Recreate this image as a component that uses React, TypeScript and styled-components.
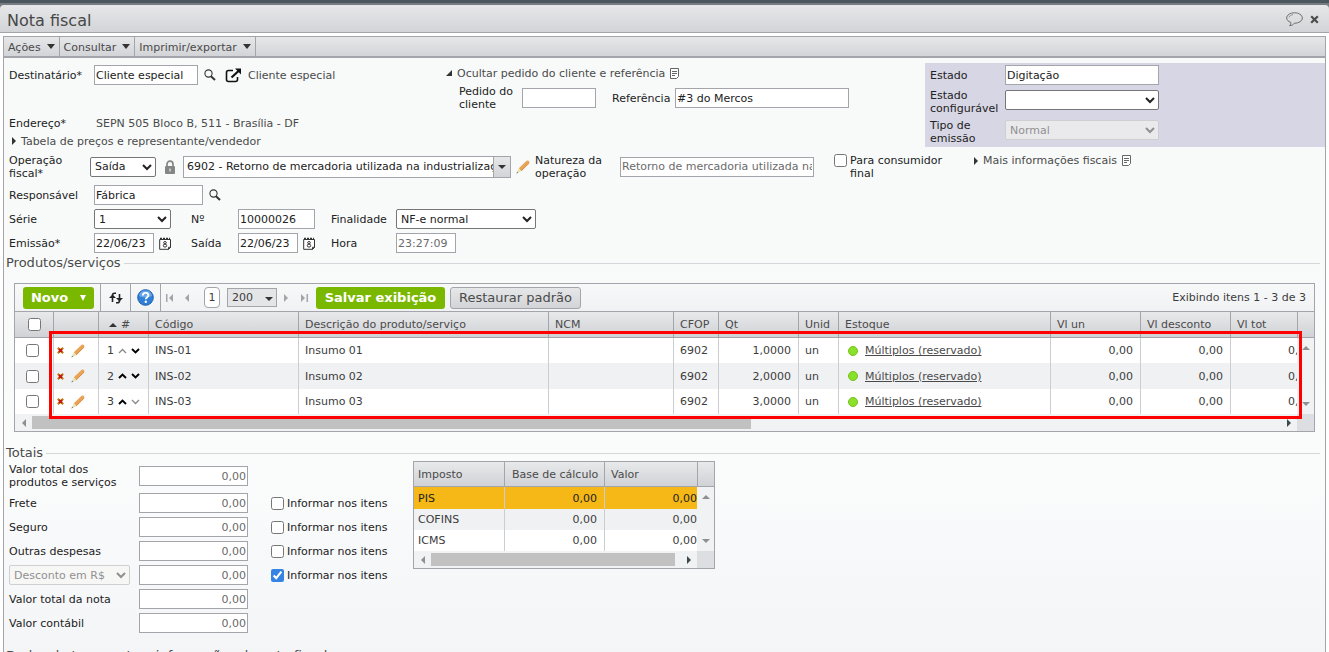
import React from "react";
import styled, { createGlobalStyle, css } from "styled-components";

const line = "#a3a5ab";
const bar = "linear-gradient(#e6e7e9, #d2d4d7)";

const GlobalStyle = createGlobalStyle`
  *, *::before, *::after { box-sizing: border-box; }
  html, body { margin: 0; height: 100%; overflow: hidden; background: #fff; }
  #root { height: 100%; }
  body, input, select, button, table {
    font-family: "DejaVu Sans", Verdana, sans-serif;
    font-size: 11px;
    line-height: 13px;
    color: #3c3c3c;
  }
  svg { display: block; flex: none; }
`;

/* ---------- window ---------- */
const Window = styled.div`
  display: flex;
  flex-direction: column;
  height: 100vh;
  overflow: hidden;
`;
const Backdrop = styled.div`
  background: linear-gradient(#4a585d 0 3px, #777c80 3px);
  padding-top: 5px;
`;
const TitleBar = styled.header`
  display: flex;
  align-items: center;
  height: 28px;
  padding: 4px 10px 0 7px;
  background: ${bar};
  border-bottom: 1px solid ${line};
  border-radius: 4px 4px 0 0;
`;
const Title = styled.h1`
  flex: 1;
  margin: 0;
  font-size: 16px;
  line-height: 20px;
  font-weight: 400;
  color: #474747;
`;
const BareButton = styled.button`
  display: inline-flex;
  align-items: center;
  justify-content: center;
  flex: none;
  padding: 0;
  border: 0;
  background: none;
  cursor: pointer;
`;
const WindowActions = styled.div`
  display: flex;
  align-items: center;
  gap: 7px;
  margin-top: -3px;
`;
const Frame = styled.main`
  flex: 1;
  min-height: 0;
  overflow: hidden;
  margin: 3px 3px 0;
  border: 1px solid ${line};
  border-bottom: 0;
  background: linear-gradient(#f7faf9 0, #fafbfb 72%, #f4f5f7 100%);
`;
const MenuBar = styled.nav`
  display: flex;
  height: 21px;
  background: ${bar};
  border-bottom: 2px solid ${line};
`;
const MenuButton = styled.button`
  display: flex;
  align-items: center;
  gap: 6px;
  padding: 2px 4px 0;
  border: 0;
  border-right: 1px solid ${line};
  background: none;
  color: #4a4a4a;
`;
const Caret = styled.span`
  border: 4px solid transparent;
  border-top: 5px solid #333;
  border-bottom: 0;
  margin-top: -3px;
`;

/* ---------- form parts ---------- */
const control = css<{ $w?: number; $right?: boolean; $muted?: boolean }>`
  flex: none;
  width: ${(p) => (p.$w ? p.$w + "px" : "100%")};
  height: 20px;
  margin: 0;
  background: #fff;
  color: ${(p) => (p.$muted ? "#6a6a6a" : "#222")};
`;
const TextBox = styled.input`
  ${control}
  padding: 0 1px;
  border: 1px solid ${line};
  text-align: ${(p) => (p.$right ? "right" : "left")};
`;
const Select = styled.select`
  ${control}
  padding: 0;
  border: 1px solid #767676;
  border-radius: 2px;
  &:disabled {
    color: #909090;
    background: rgba(246, 246, 244, 0.6);
    border-color: #cfcfd2;
    opacity: 1;
  }
`;
const Label = styled.label<{ $w?: number }>`
  flex: none;
  width: ${(p) => (p.$w ? p.$w + "px" : "auto")};
  color: #222;
`;
const Value = styled.span`
  color: #4a4a4a;
`;
const Header = styled.section`
  display: grid;
  grid-template-columns: 441fr 480fr 400fr;
  padding-top: 5px;
`;
const Column = styled.div<{ $pad: number }>`
  min-width: 0;
  padding-left: ${(p) => p.$pad}px;
`;
const Row = styled.div<{ $h?: number; $gap?: number }>`
  display: flex;
  align-items: center;
  gap: ${(p) => p.$gap ?? 0}px;
  min-height: ${(p) => p.$h ?? 24}px;
  white-space: nowrap;
`;
const AddressRow = styled(Row)`
  margin-top: 27px;
`;
const AddressLabel = styled.span`
  flex: none;
  width: 87px;
  color: #222;
`;
const Gap = styled.span<{ $w: number }>`
  flex: none;
  width: ${(p) => p.$w}px;
`;
const Disclosure = styled.button`
  display: flex;
  align-items: center;
  gap: 5px;
  padding: 0;
  border: 0;
  background: none;
  color: #4a4a4a;
  white-space: nowrap;
`;
const FiscalDisclosure = styled(Disclosure)`
  align-self: flex-start;
  margin-top: 4px;
`;
const StatePanel = styled.div`
  display: grid;
  grid-template-columns: 75px 154px;
  grid-template-rows: 24px 30px 30px;
  align-items: center;
  padding-left: 5px;
  align-self: start;
  background: #d7d6e4;
  & > input, & > select {
    align-self: start;
    margin-top: 3px;
  }
  & > input { margin-top: 2px; }
`;
const OperationRow = styled.section`
  display: flex;
  align-items: center;
  height: 33px;
  padding-left: 5px;
`;
const Combo = styled.div`
  display: flex;
  width: 328px;
  height: 22px;
  border: 1px solid ${line};
  background: #fff;
  & > input {
    flex: 1;
    min-width: 0;
    padding: 0 0 0 3px;
    border: 0;
    background: none;
    color: #222;
  }
`;
const ComboButton = styled.button`
  display: grid;
  place-items: center;
  width: 17px;
  padding: 0;
  border: 0;
  border-left: 1px solid ${line};
  background: ${bar};
`;
const Check = styled.input.attrs({ type: "checkbox" })`
  flex: none;
  width: 13px;
  height: 13px;
  margin: 0;
  accent-color: #3584e4;
`;
const CheckLabel = styled.label<{ $w?: number }>`
  display: flex;
  align-items: flex-start;
  gap: 3px;
  width: ${(p) => (p.$w ? p.$w + "px" : "auto")};
  color: #222;
`;
const Details = styled.div`
  padding-left: 5px;
`;
const Dates = styled.div`
  display: grid;
  grid-template-columns: 85px 97px 47px 93px 65px 140px;
  grid-auto-rows: 24px;
  align-items: center;
`;
const SectionTitle = styled.h2`
  display: flex;
  align-items: center;
  gap: 3px;
  margin: 0;
  padding: 0 5px 0 2px;
  font-size: 13px;
  line-height: 16px;
  font-weight: 400;
  color: #4a4a4a;
  &::after {
    content: "";
    flex: 1;
    border-top: 1px solid #d4d6da;
  }
`;

/* ---------- items grid ---------- */
const GridBox = styled.section`
  position: relative;
  margin: 12px 10px 13px;
  border: 1px solid ${line};
  background: #fff;
`;
const Highlight = styled.div`
  position: absolute;
  top: 47px;
  left: 34px;
  right: 12px;
  height: 88px;
  border: 3px solid #f00;
  pointer-events: none;
`;
const ToolBar = styled.div`
  display: flex;
  align-items: center;
  height: 28px;
  padding: 0 8px;
  background: linear-gradient(#f7f8f8, #f1f2f4);
  border-bottom: 1px solid ${line};
`;
const GreenButton = styled.button<{ $w: number }>`
  display: flex;
  align-items: center;
  justify-content: center;
  gap: 12px;
  width: ${(p) => p.$w}px;
  height: 22px;
  padding: 0;
  border: 0;
  border-radius: 3px;
  background: #7ab800;
  color: #fff;
  font-size: 13px;
  font-weight: 700;
  white-space: nowrap;
`;
const GreyButton = styled(GreenButton)`
  border: 1px solid ${line};
  background: ${bar};
  color: #4a4a4a;
  font-weight: 400;
`;
const WhiteCaret = styled.span`
  border: 3px solid transparent;
  border-top: 6px solid #fff;
  border-bottom: 0;
`;
const ToolCell = styled(BareButton)<{ $w: number; $line?: boolean }>`
  width: ${(p) => p.$w}px;
  height: 27px;
  border-left: ${(p) => (p.$line ? `1px solid ${line}` : "0")};
`;
const PageBox = styled.button`
  width: 16px;
  height: 21px;
  padding: 0;
  border: 1px solid ${line};
  border-radius: 4px;
  background: #fff;
`;
const PageSize = styled.div`
  position: relative;
  width: 50px;
  height: 20px;
  & > select {
    appearance: none;
    width: 100%;
    height: 19px;
    padding: 0 4px;
    border: 1px solid ${line};
    background: #e4e5e7;
  }
  & > span {
    position: absolute;
    right: 4px;
    top: 9px;
    pointer-events: none;
  }
`;
const Summary = styled.span`
  margin-left: auto;
`;
const Table = styled.table`
  width: 100%;
  table-layout: fixed;
  border-collapse: separate;
  border-spacing: 0;
`;
const Th = styled.th<{ $w?: number; $pad?: number; $h?: number }>`
  width: ${(p) => (p.$w ? p.$w + "px" : "auto")};
  height: ${(p) => p.$h ?? 26}px;
  padding: 0 0 0 ${(p) => p.$pad ?? 6}px;
  border-left: 1px solid ${line};
  border-bottom: 1px solid ${line};
  background: linear-gradient(#e8e9eb, #d0d2d5);
  color: #4a4a4a;
  font-weight: 400;
  text-align: left;
  white-space: nowrap;
  &:first-child { border-left: 0; }
`;
const Td = styled.td<{ $right?: boolean; $pad?: number }>`
  height: inherit;
  padding: 0 7px 0 ${(p) => p.$pad ?? 6}px;
  border-left: 1px solid #cbcdd0;
  text-align: ${(p) => (p.$right ? "right" : "left")};
  white-space: nowrap;
  overflow: hidden;
  &:first-child { border-left: 0; }
`;
const ItemTr = styled.tr`
  height: 25px;
  &:nth-child(even) { background: #f0f1f3; }
  &:nth-child(2) { height: 26px; }
`;
const Icons = styled.span<{ $gap: number }>`
  display: flex;
  align-items: center;
  gap: ${(p) => p.$gap}px;
`;
const Link = styled.a`
  color: #4a4a4a;
`;
const Dot = styled.span`
  width: 10px;
  height: 10px;
  border-radius: 50%;
  border: 1px solid #74c21c;
  background: #8ae02a;
`;
const ScrollTd = styled.td`
  padding: 0;
  background: #f1f2f3;
`;
const ScrollTrack = styled.div<{ $h: number }>`
  display: flex;
  flex-direction: column;
  align-items: center;
  justify-content: space-between;
  height: ${(p) => p.$h}px;
  padding: 8px 0;
`;
const HScroll = styled.div`
  display: flex;
  align-items: center;
  height: 17px;
  background: #f1f2f3;
`;
const ScrollEnd = styled.span`
  display: grid;
  place-items: center;
  flex: none;
  width: 17px;
`;
const ThumbTrack = styled.span`
  flex: 1;
  display: flex;
`;
const Thumb = styled.span<{ $pct: number }>`
  width: ${(p) => p.$pct}%;
  height: 13px;
  background: #c1c1c1;
`;
const Corner = styled.span`
  width: 17px;
  height: 17px;
  background: #dcdee1;
`;

/* ---------- totals ---------- */
const Totals = styled.section`
  display: flex;
  align-items: flex-start;
  min-height: 187px;
`;
const TotalsForm = styled.div`
  width: 409px;
  padding-left: 5px;
`;
const LabelCell = styled.div`
  flex: none;
  width: 130px;
  color: #222;
`;
const TaxBox = styled.div`
  width: 302px;
  border: 1px solid ${line};
  background: #fff;
`;
const TaxTr = styled.tr<{ $active?: boolean }>`
  height: 21px;
  &:nth-child(even) { background: #f0f1f3; }
  ${(p) => p.$active && css`
    height: 22px;
    background: #f5b816;
    td { color: #222; }
  `}
`;
const ClippedTd = styled(Td)`
  padding-left: ${(p) => p.$pad}px;
  padding-right: 0;
`;

/* ---------- icons ---------- */
const SearchIcon = () => (
  <svg width="12" height="12" viewBox="0 0 12 12" fill="none" stroke="#333">
    <circle cx="4.5" cy="4.5" r="3.6" strokeWidth="1.1" />
    <path d="M7 7.3 11 11" strokeWidth="2" />
  </svg>
);
const OpenIcon = () => (
  <svg width="17" height="15" viewBox="0 0 17 15" fill="none" stroke="#111">
    <path d="M8 2.5H3.5Q1.5 2.5 1.5 4.5v7q0 2 2 2h7q2 0 2-2V9" strokeWidth="1.6" />
    <path d="M6.5 9.5 13.5 3" strokeWidth="2.2" />
    <path d="M10 .5h6v6z" fill="#111" stroke="none" />
  </svg>
);
const NoteIcon = () => (
  <svg width="9" height="11" viewBox="0 0 9 11" fill="none" stroke="#666">
    <path d="M.5.5h8v8l-2 2h-6z" fill="#fff" />
    <path d="M2 3.5h5M2 5.5h5M2 7.5h3" />
  </svg>
);
const LockIcon = () => (
  <svg width="12" height="14" viewBox="0 0 12 14">
    <path d="M3 7V4.200a3 3 0 0 1 6 0V7" fill="none" stroke="#858585" strokeWidth="1.7" />
    <rect x="1" y="6" width="10" height="8" rx="1" fill="#858585" />
    <path d="M6 8.500v3" stroke="#ddd" strokeWidth="1.400" />
  </svg>
);
const PencilIcon = () => (
  <svg width="14" height="14" viewBox="0 0 14 14">
    <path d="M2.800 8.300 10.600.7q1.500-.5 2.500.6.700 1.100-.1 2.200L5.400 11.300z" fill="#e9a458" />
    <path d="m5 10.800 8-7.600" stroke="#cf8438" strokeWidth=".7" />
    <path d="M2.800 8.300 5.400 11.300.7 13.200z" fill="#e6e3b0" />
    <path d="m.4 13.600.7-2 1.200 1.200z" fill="#777" />
  </svg>
);
const CalendarIcon = () => (
  <svg width="12" height="13" viewBox="0 0 12 13" fill="none" stroke="#333">
    <path d="M.7 2.500h10.800v8L9.500 12.300H.7z" fill="#fff" />
    <path d="M1 1.500h10" strokeDasharray="2 1" strokeWidth="1.500" />
    <ellipse cx="6" cy="5.700" rx="1.300" ry="1.200" />
    <ellipse cx="6" cy="8.600" rx="1.700" ry="1.500" />
    <path d="M9.500 12.300v-2h2" />
  </svg>
);
const BalloonIcon = () => (
  <svg width="17" height="15" viewBox="0 0 17 15" fill="none" stroke="#6e6e6e">
    <path d="M4.700 10.300C2.200 9.500.7 7.900.7 6c0-3 3.500-5.200 7.800-5.200S16.300 3 16.300 6s-3.500 5.200-7.800 5.200c-1 1.400-2.600 2.200-5 2.500 1.200-1 1.500-2 1.200-3.400z" />
    <path d="M3 5.500c.4-1.500 2-2.500 4-2.800" strokeWidth=".7" />
  </svg>
);
const CloseIcon = () => (
  <svg width="9" height="9" viewBox="0 0 9 9">
    <path d="m1.200 1.200 6.600 6.600m0-6.600L1.200 7.800" stroke="#4c4c4c" strokeWidth="2.200" />
  </svg>
);
const RefreshIcon = () => (
  <svg width="14" height="12" viewBox="0 0 14 12" fill="none" stroke="#222">
    <path d="M7 1.200H5.500q-2 0-2 2V10" strokeWidth="1.600" />
    <path d="M0 6h7L3.500 2.500z" fill="#222" stroke="none" />
    <path d="M7 10.800h1.500q2 0 2-2V2" strokeWidth="1.600" />
    <path d="M7 6h7l-3.500 3.500z" fill="#222" stroke="none" />
  </svg>
);
const HelpIcon = () => (
  <svg width="17" height="17" viewBox="0 0 17 17">
    <circle cx="8.500" cy="8.500" r="7.800" fill="#2f7fd6" stroke="#1d5fb0" />
    <path d="M2 7a6.600 6.600 0 0 1 13 0q-6.500 3-13 0z" fill="#68a8ea" />
    <path d="M5.800 6.600c0-1.700 1.200-2.700 2.800-2.700s2.800 1 2.800 2.400c0 1.900-2.600 1.900-2.600 4" fill="none" stroke="#fff" strokeWidth="1.900" />
    <circle cx="8.800" cy="12.700" r="1.200" fill="#fff" />
  </svg>
);
const Tri = ({ d, c = "#333" }: { d: "up" | "down" | "left" | "right" | "corner"; c?: string }) => {
  const shapes = {
    up: [8, 4, "M0 4h8L4 0z"],
    down: [8, 4, "M0 0h8L4 4z"],
    left: [4, 8, "M4 0v8L0 4z"],
    right: [4, 8, "M0 0v8l4-4z"],
    corner: [6, 6, "M6 0v6H0z"],
  } as const;
  const [w, h, path] = shapes[d];
  return (
    <svg width={w} height={h} viewBox={`0 0 ${w} ${h}`}>
      <path d={path} fill={c} />
    </svg>
  );
};
const PageEnd = ({ flip }: { flip?: boolean }) => (
  <svg width="7" height="8" viewBox="0 0 7 8" fill="#a3a5ab">
    <path d={flip ? "M0 0v8l4-4zM5.500 0H7v8H5.500z" : "M7 0v8L3 4zM0 0h1.500v8H0z"} />
  </svg>
);
const Chevron = ({ up, off }: { up?: boolean; off?: boolean }) => (
  <svg width="9" height="6" viewBox="0 0 9 6" fill="none">
    <path d={up ? "M1 5l3.500-3.500L8 5" : "M1 1l3.500 3.500L8 1"} stroke={off ? "#888" : "#000"} strokeWidth={off ? 1.3 : 1.9} />
  </svg>
);
const DeleteIcon = () => (
  <svg width="7" height="7" viewBox="0 0 7 7">
    <path d="M.8.8l5.400 5.400M6.200.8.8 6.200" stroke="#c07a10" strokeWidth="2" />
    <path d="M2 2l3 3M5 2 2 5" stroke="#c8180c" strokeWidth="1.800" />
  </svg>
);

/* ---------- data ---------- */
const items = [
  { n: 1, code: "INS-01", name: "Insumo 01", qty: "1,0000" },
  { n: 2, code: "INS-02", name: "Insumo 02", qty: "2,0000" },
  { n: 3, code: "INS-03", name: "Insumo 03", qty: "3,0000" },
];
const totals = [
  { id: "frete", label: "Frete", check: true },
  { id: "seguro", label: "Seguro", check: true },
  { id: "outras", label: "Outras despesas", check: true },
  { id: "desconto", label: "", check: true, on: true },
  { id: "nota", label: "Valor total da nota" },
  { id: "contabil", label: "Valor contábil" },
];
const taxes = ["PIS", "COFINS", "ICMS"];

const HorizontalScroll = ({ pct }: { pct: number }) => (
  <HScroll>
    <ScrollEnd><Tri d="left" c="#8d8f93" /></ScrollEnd>
    <ThumbTrack><Thumb $pct={pct} /></ThumbTrack>
    <ScrollEnd><Tri d="right" c="#3c4a4f" /></ScrollEnd>
    <Corner />
  </HScroll>
);
const VerticalScroll = ({ h }: { h: number }) => (
  <ScrollTd rowSpan={3}>
    <ScrollTrack $h={h}>
      <Tri d="up" c="#8d8f93" />
      <Tri d="down" c="#8d8f93" />
    </ScrollTrack>
  </ScrollTd>
);

export default function App() {
  return (
    <Window>
      <GlobalStyle />
      <Backdrop>
        <TitleBar>
          <Title>Nota fiscal</Title>
          <WindowActions>
            <BareButton aria-label="Comentários"><BalloonIcon /></BareButton>
            <BareButton aria-label="Fechar"><CloseIcon /></BareButton>
          </WindowActions>
        </TitleBar>
      </Backdrop>
      <Frame>
        <MenuBar>
          {["Ações", "Consultar", "Imprimir/exportar"].map((m) => (
            <MenuButton key={m}>{m}<Caret /></MenuButton>
          ))}
        </MenuBar>

        <Header>
          <Column $pad={5}>
            <Row>
              <Label $w={85} htmlFor="dest">Destinatário*</Label>
              <TextBox id="dest" $w={104} defaultValue="Cliente especial" />
              <Gap $w={6} />
              <BareButton aria-label="Pesquisar destinatário"><SearchIcon /></BareButton>
              <Gap $w={9} />
              <BareButton aria-label="Abrir cadastro"><OpenIcon /></BareButton>
              <Gap $w={6} />
              <Value>Cliente especial</Value>
            </Row>
            <AddressRow $h={18}>
              <AddressLabel>Endereço*</AddressLabel>
              <Value>SEPN 505 Bloco B, 511 - Brasília - DF</Value>
            </AddressRow>
            <Row $h={18}>
              <Gap $w={3} />
              <Disclosure><Tri d="right" />Tabela de preços e representante/vendedor</Disclosure>
            </Row>
          </Column>
          <Column $pad={1}>
            <Row $h={20} $gap={5}>
              <Disclosure><Tri d="corner" />Ocultar pedido do cliente e referência</Disclosure>
              <NoteIcon />
            </Row>
            <Row $h={30}>
              <Gap $w={13} />
              <Label $w={63} htmlFor="pedido">Pedido do<br />cliente</Label>
              <TextBox id="pedido" $w={74} />
              <Gap $w={16} />
              <Label $w={63} htmlFor="ref">Referência</Label>
              <TextBox id="ref" $w={174} defaultValue="#3 do Mercos" />
            </Row>
          </Column>
          <StatePanel>
            <Label htmlFor="estado">Estado</Label>
            <TextBox id="estado" readOnly defaultValue="Digitação" />
            <Label htmlFor="config">Estado<br />configurável</Label>
            <Select id="config"><option></option></Select>
            <Label htmlFor="emissao-tipo">Tipo de<br />emissão</Label>
            <Select id="emissao-tipo" disabled><option>Normal</option></Select>
          </StatePanel>
        </Header>

        <OperationRow>
          <Label $w={81} htmlFor="oper">Operação<br />fiscal*</Label>
          <Select id="oper" $w={66}><option>Saída</option></Select>
          <Gap $w={8} />
          <LockIcon />
          <Gap $w={7} />
          <Combo>
            <input aria-label="Operação" defaultValue="6902 - Retorno de mercadoria utilizada na industrialização por encomenda" />
            <ComboButton aria-label="Abrir lista"><Tri d="down" /></ComboButton>
          </Combo>
          <Gap $w={5} />
          <BareButton aria-label="Editar operação"><PencilIcon /></BareButton>
          <Gap $w={5} />
          <Label $w={85} htmlFor="nat">Natureza da<br />operação</Label>
          <TextBox id="nat" $w={194} $muted readOnly defaultValue="Retorno de mercadoria utilizada na industrialização" />
          <Gap $w={20} />
          <CheckLabel $w={140}><Check /><span>Para consumidor<br />final</span></CheckLabel>
          <FiscalDisclosure><Tri d="right" />Mais informações fiscais<NoteIcon /></FiscalDisclosure>
        </OperationRow>

        <Details>
          <Row>
            <Label $w={85} htmlFor="resp">Responsável</Label>
            <TextBox id="resp" $w={109} defaultValue="Fábrica" />
            <Gap $w={6} />
            <BareButton aria-label="Pesquisar responsável"><SearchIcon /></BareButton>
          </Row>
          <Dates>
            <Label htmlFor="serie">Série</Label>
            <Select id="serie" $w={77}><option>1</option></Select>
            <Label htmlFor="numero">Nº</Label>
            <TextBox id="numero" $w={77} defaultValue="10000026" />
            <Label htmlFor="final">Finalidade</Label>
            <Select id="final" $w={140}><option>NF-e normal</option></Select>
            <Label htmlFor="emissao">Emissão*</Label>
            <Row $gap={5}>
              <TextBox id="emissao" $w={60} defaultValue="22/06/23" />
              <BareButton aria-label="Calendário de emissão"><CalendarIcon /></BareButton>
            </Row>
            <Label htmlFor="saida">Saída</Label>
            <Row $gap={5}>
              <TextBox id="saida" $w={60} defaultValue="22/06/23" />
              <BareButton aria-label="Calendário de saída"><CalendarIcon /></BareButton>
            </Row>
            <Label htmlFor="hora">Hora</Label>
            <TextBox id="hora" $w={60} $muted readOnly defaultValue="23:27:09" />
          </Dates>
        </Details>

        <SectionTitle>Produtos/serviços</SectionTitle>
        <GridBox>
          <ToolBar>
            <GreenButton $w={71}>Novo<WhiteCaret /></GreenButton>
            <Gap $w={6} />
            <ToolCell $w={30} $line aria-label="Atualizar"><RefreshIcon /></ToolCell>
            <ToolCell $w={30} $line aria-label="Ajuda"><HelpIcon /></ToolCell>
            <ToolCell $w={18} $line aria-label="Primeira página"><PageEnd /></ToolCell>
            <ToolCell $w={18} aria-label="Página anterior"><Tri d="left" c="#a3a5ab" /></ToolCell>
            <Gap $w={8} />
            <PageBox>1</PageBox>
            <Gap $w={7} />
            <PageSize>
              <select aria-label="Itens por página"><option>200</option></select>
              <span><Tri d="down" /></span>
            </PageSize>
            <ToolCell $w={18} aria-label="Próxima página"><Tri d="right" c="#a3a5ab" /></ToolCell>
            <ToolCell $w={18} aria-label="Última página"><PageEnd flip /></ToolCell>
            <Gap $w={3} />
            <GreenButton $w={129}>Salvar exibição</GreenButton>
            <Gap $w={5} />
            <GreyButton $w={131}>Restaurar padrão</GreyButton>
            <Summary>Exibindo itens 1 - 3 de 3</Summary>
          </ToolBar>
          <Table>
            <thead>
              <tr>
                <Th $w={38} $pad={13}><Icons $gap={0}><Check aria-label="Selecionar todos" /></Icons></Th>
                <Th $w={45} />
                <Th $w={50} $pad={10}><Icons $gap={4}><Tri d="up" />#</Icons></Th>
                <Th $w={150}>Código</Th>
                <Th $w={250}>Descrição do produto/serviço</Th>
                <Th $w={125}>NCM</Th>
                <Th $w={45}>CFOP</Th>
                <Th $w={80}>Qt</Th>
                <Th $w={40}>Unid</Th>
                <Th>Estoque</Th>
                <Th $w={90}>Vl un</Th>
                <Th $w={90}>Vl desconto</Th>
                <Th $w={67}>Vl tot</Th>
                <Th $w={17} />
              </tr>
            </thead>
            <tbody>
              {items.map((it, i) => (
                <ItemTr key={it.n}>
                  <Td $pad={11}><Icons $gap={0}><Check aria-label={`Selecionar ${it.name}`} /></Icons></Td>
                  <Td $pad={3}>
                    <Icons $gap={7}>
                      <BareButton aria-label="Excluir"><DeleteIcon /></BareButton>
                      <BareButton aria-label="Editar"><PencilIcon /></BareButton>
                    </Icons>
                  </Td>
                  <Td $pad={8}>
                    <Icons $gap={4}>
                      {it.n}
                      <BareButton aria-label="Subir"><Chevron up off={i === 0} /></BareButton>
                      <BareButton aria-label="Descer"><Chevron off={i === items.length - 1} /></BareButton>
                    </Icons>
                  </Td>
                  <Td>{it.code}</Td>
                  <Td>{it.name}</Td>
                  <Td />
                  <Td>6902</Td>
                  <Td $right>{it.qty}</Td>
                  <Td>un</Td>
                  <Td $pad={9}><Icons $gap={7}><Dot /><Link href="#estoque">Múltiplos (reservado)</Link></Icons></Td>
                  <Td $right>0,00</Td>
                  <Td $right>0,00</Td>
                  <ClippedTd $pad={57}>0,00</ClippedTd>
                  {i === 0 && <VerticalScroll h={76} />}
                </ItemTr>
              ))}
            </tbody>
          </Table>
          <HorizontalScroll pct={57.6} />
          <Highlight />
        </GridBox>

        <SectionTitle>Totais</SectionTitle>
        <Totals>
          <TotalsForm>
            <Row $h={30}>
              <LabelCell><label htmlFor="produtos">Valor total dos<br />produtos e serviços</label></LabelCell>
              <TextBox id="produtos" $w={109} $right $muted readOnly defaultValue="0,00" />
            </Row>
            {totals.map((t) => (
              <Row key={t.id}>
                <LabelCell>
                  {t.label ? (
                    <label htmlFor={t.id}>{t.label}</label>
                  ) : (
                    <Select aria-label="Tipo de desconto" $w={121} disabled><option>Desconto em R$</option></Select>
                  )}
                </LabelCell>
                <TextBox id={t.id} aria-label={t.label || "Desconto"} $w={109} $right $muted readOnly defaultValue="0,00" />
                <Gap $w={23} />
                {t.check && <CheckLabel><Check defaultChecked={t.on} />Informar nos itens</CheckLabel>}
              </Row>
            ))}
          </TotalsForm>
          <TaxBox>
            <Table>
              <thead>
                <tr>
                  <Th $w={90} $h={25} $pad={4}>Imposto</Th>
                  <Th $w={100} $h={25} $pad={7}>Base de cálculo</Th>
                  <Th $h={25}>Valor</Th>
                  <Th $w={17} $h={25} />
                </tr>
              </thead>
              <tbody>
                {taxes.map((t, i) => (
                  <TaxTr key={t} $active={i === 0}>
                    <Td $pad={4}>{t}</Td>
                    <Td $right>0,00</Td>
                    <ClippedTd $right>0,00</ClippedTd>
                    {i === 0 && <VerticalScroll h={64} />}
                  </TaxTr>
                ))}
              </tbody>
            </Table>
            <HorizontalScroll pct={98} />
          </TaxBox>
        </Totals>
        <SectionTitle>Dados de transporte e informações da nota fiscal</SectionTitle>
      </Frame>
    </Window>
  );
}
